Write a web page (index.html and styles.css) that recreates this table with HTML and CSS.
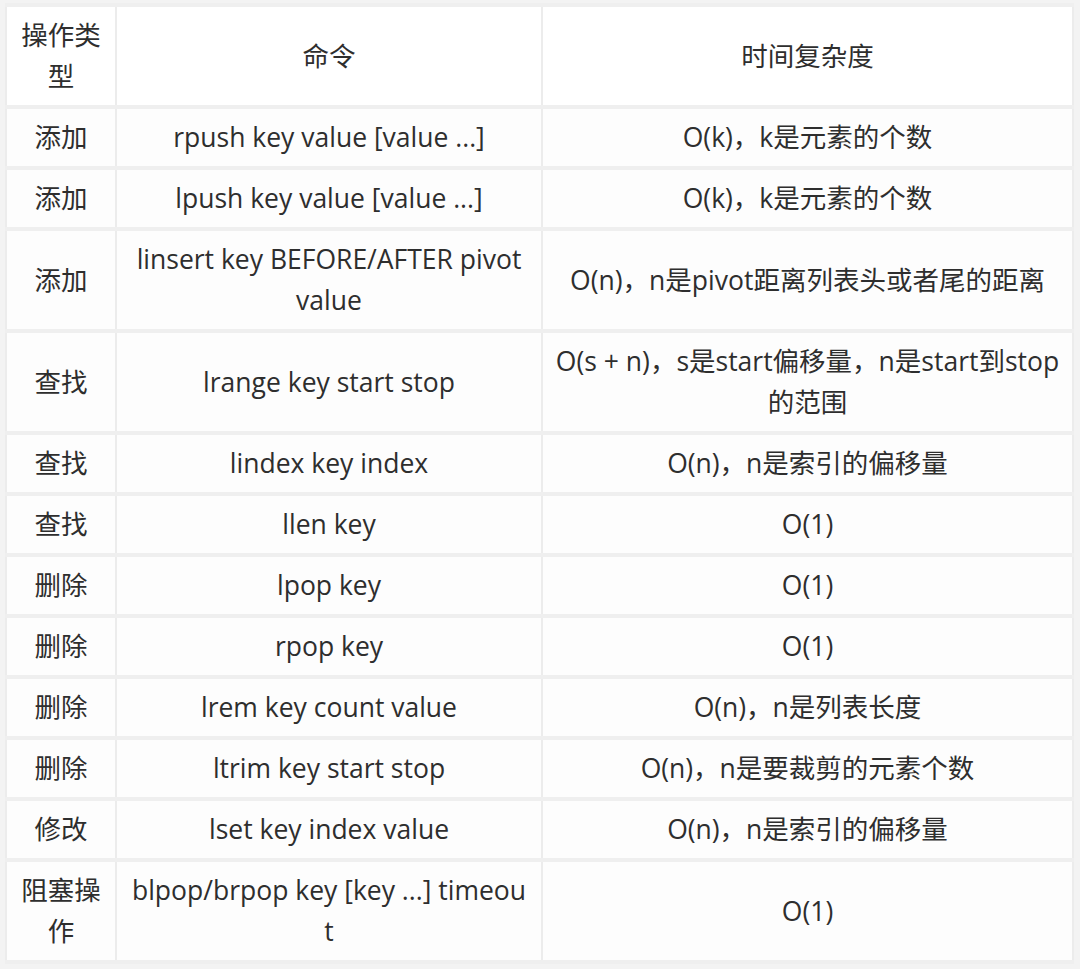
FILE: index.html
```html
<!DOCTYPE html>
<html lang="zh-CN">
<head>
<meta charset="utf-8">
<title>Redis List 命令</title>
<link rel="stylesheet" href="styles.css">
</head>
<body>
<div class="page">
<table class="cmd-table">
  <colgroup>
    <col class="c-type">
    <col class="c-cmd">
    <col class="c-cost">
  </colgroup>
  <thead>
    <tr><th>操作类<br>型</th><th>命令</th><th>时间复杂度</th></tr>
  </thead>
  <tbody>
    <tr><td>添加</td><td>rpush key value [value ...]</td><td>O(k)，k是元素的个数</td></tr>
    <tr><td>添加</td><td>lpush key value [value ...]</td><td>O(k)，k是元素的个数</td></tr>
    <tr><td>添加</td><td>linsert key BEFORE/AFTER pivot<br>value</td><td>O(n)，n是pivot距离列表头或者尾的距离</td></tr>
    <tr><td>查找</td><td>lrange key start stop</td><td>O(s + n)，s是start偏移量，n是start到stop<br>的范围</td></tr>
    <tr><td>查找</td><td>lindex key index</td><td>O(n)，n是索引的偏移量</td></tr>
    <tr><td>查找</td><td>llen key</td><td>O(1)</td></tr>
    <tr><td>删除</td><td>lpop key</td><td>O(1)</td></tr>
    <tr><td>删除</td><td>rpop key</td><td>O(1)</td></tr>
    <tr><td>删除</td><td>lrem key count value</td><td>O(n)，n是列表长度</td></tr>
    <tr><td>删除</td><td>ltrim key start stop</td><td>O(n)，n是要裁剪的元素个数</td></tr>
    <tr><td>修改</td><td>lset key index value</td><td>O(n)，n是索引的偏移量</td></tr>
    <tr><td>阻塞操<br>作</td><td>blpop/brpop key [key ...] timeou<br>t</td><td>O(1)</td></tr>
  </tbody>
</table>
</div>
</body>
</html>
```

FILE: styles.css
```css
html, body {
  margin: 0;
  padding: 0;
  background: #f3f3f3;
}

.page {
  padding: 3px 8px 9px 5px;
}

.cmd-table {
  width: 1067px;
  table-layout: fixed;
  border-collapse: collapse;
  font-family: "Open Sans", "Noto Sans CJK SC", sans-serif;
  font-size: 26.5px;
  line-height: 41px;
  color: #2e2e2e;
  background: #fdfdfd;
}

.c-type { width: 110px; }
.c-cmd { width: 426px; }
.c-cost { width: 531px; }

.cmd-table th,
.cmd-table td {
  padding: 8px 4px;
  text-align: center;
  vertical-align: middle;
  font-weight: normal;
  white-space: nowrap;
  border-top: 4px solid #efefef;
  border-bottom: 4px solid #efefef;
  border-left: 2px solid #ececec;
  border-right: 2px solid #ececec;
}

.cmd-table th {
  background: #ffffff;
}
```
